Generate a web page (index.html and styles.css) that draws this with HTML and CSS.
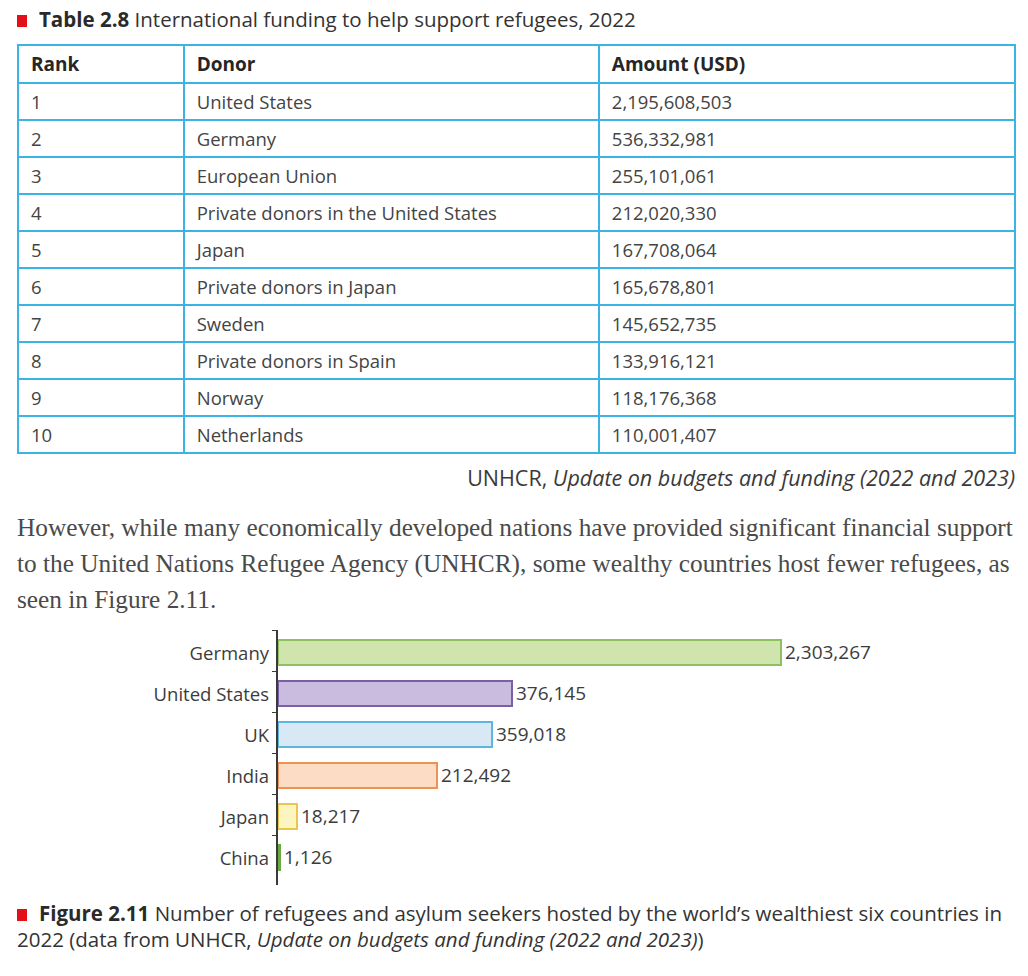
FILE: index.html
```html
<!DOCTYPE html>
<html lang="en">
<head>
  <meta charset="UTF-8">
  <title>Table 2.8 and Figure 2.11</title>
  <link rel="stylesheet" href="styles.css">
</head>
<body>
  <div class="page">
    <div class="caption table-caption">
      <span class="marker"></span><b>Table 2.8</b> International funding to help support refugees, 2022
    </div>

    <table class="donors">
      <colgroup>
        <col class="col-rank">
        <col class="col-donor">
        <col class="col-amount">
      </colgroup>
      <thead>
        <tr><th>Rank</th><th>Donor</th><th>Amount (USD)</th></tr>
      </thead>
      <tbody>
        <tr><td>1</td><td>United States</td><td>2,195,608,503</td></tr>
        <tr><td>2</td><td>Germany</td><td>536,332,981</td></tr>
        <tr><td>3</td><td>European Union</td><td>255,101,061</td></tr>
        <tr><td>4</td><td>Private donors in the United States</td><td>212,020,330</td></tr>
        <tr><td>5</td><td>Japan</td><td>167,708,064</td></tr>
        <tr><td>6</td><td>Private donors in Japan</td><td>165,678,801</td></tr>
        <tr><td>7</td><td>Sweden</td><td>145,652,735</td></tr>
        <tr><td>8</td><td>Private donors in Spain</td><td>133,916,121</td></tr>
        <tr><td>9</td><td>Norway</td><td>118,176,368</td></tr>
        <tr><td>10</td><td>Netherlands</td><td>110,001,407</td></tr>
      </tbody>
    </table>

    <div class="source">UNHCR, <i>Update on budgets and funding (2022 and 2023)</i></div>

    <p class="body-text">However, while many economically developed nations have provided significant financial support to the United Nations Refugee Agency (UNHCR), some wealthy countries host fewer refugees, as seen in Figure 2.11.</p>

    <div class="chart">
      <div class="chart-row">
        <div class="label">Germany</div>
        <div class="bar-cell"><div class="bar green" style="width: 505px"></div><span class="value">2,303,267</span></div>
      </div>
      <div class="chart-row">
        <div class="label">United States</div>
        <div class="bar-cell"><div class="bar purple" style="width: 236px"></div><span class="value">376,145</span></div>
      </div>
      <div class="chart-row">
        <div class="label">UK</div>
        <div class="bar-cell"><div class="bar blue" style="width: 216px"></div><span class="value">359,018</span></div>
      </div>
      <div class="chart-row">
        <div class="label">India</div>
        <div class="bar-cell"><div class="bar orange" style="width: 161px"></div><span class="value">212,492</span></div>
      </div>
      <div class="chart-row">
        <div class="label">Japan</div>
        <div class="bar-cell"><div class="bar yellow" style="width: 21px"></div><span class="value">18,217</span></div>
      </div>
      <div class="chart-row">
        <div class="label">China</div>
        <div class="bar-cell"><div class="bar dark-green" style="width: 4px"></div><span class="value">1,126</span></div>
      </div>
    </div>

    <div class="caption figure-caption">
      <span class="marker"></span><b>Figure 2.11</b> Number of refugees and asylum seekers hosted by the world’s wealthiest six countries in 2022 (data from UNHCR, <i>Update on budgets and funding (2022 and 2023)</i>)
    </div>
  </div>
</body>
</html>
```

FILE: styles.css
```css
* {
  margin: 0;
  padding: 0;
  box-sizing: border-box;
}

body {
  background: #ffffff;
  font-family: "Open Sans", "Noto Sans", sans-serif;
  color: #3c3c3c;
}

.page {
  padding: 6px 10px 0 17px;
}

/* captions with red marker */
.caption {
  font-size: 20.5px;
  line-height: 26px;
  color: #333333;
}

.caption b {
  color: #2a2a2a;
  font-weight: 700;
}

.marker {
  display: inline-block;
  width: 10px;
  height: 12px;
  margin-right: 12px;
  background: #e3101a;
}

/* table */
.donors {
  width: 999px;
  margin-top: 12px;
  border-collapse: collapse;
  font-size: 18.5px;
  border: 2px solid #3ab4e4;
}

.col-rank { width: 166px; }
.col-donor { width: 416px; }
.col-amount { width: 417px; }

.donors th,
.donors td {
  height: 37px;
  padding: 0 12px;
  text-align: left;
  border: 2px solid #3ab4e4;
  vertical-align: middle;
}

.donors th {
  font-weight: 700;
  font-size: 19px;
  color: #262626;
  height: 38px;
}

.donors td {
  font-weight: 400;
  color: #444444;
}

.source {
  margin-top: 11px;
  padding-right: 3px;
  text-align: right;
  font-size: 21.5px;
  line-height: 26px;
  color: #3a3a3a;
}

/* paragraph */
.body-text {
  margin-top: 18px;
  width: 1001px;
  font-family: "Liberation Serif", serif;
  font-size: 25.3px;
  line-height: 36px;
  color: #4a4a4a;
}

/* chart */
.chart {
  margin-top: 17px;
  padding: 4px 0 8px;
  display: flex;
  flex-direction: column;
  gap: 13px;
}

.chart-row {
  display: flex;
  align-items: center;
  height: 28px;
}

.label {
  width: 260px;
  padding-right: 8px;
  text-align: right;
  font-size: 18.5px;
  color: #3c3c3c;
}

.bar-cell {
  position: relative;
  display: flex;
  align-items: center;
  height: 28px;
  gap: 3px;
}

/* axis spans the gaps between rows */
.bar-cell::before {
  content: "";
  position: absolute;
  left: -1px;
  top: -8px;
  bottom: -7px;
  width: 2px;
  background: #3a3a3a;
}

.bar-cell::after {
  content: "";
  position: absolute;
  left: -5px;
  top: -8px;
  width: 5px;
  height: 1px;
  background: #3a3a3a;
}

.chart-row:last-child .bar-cell::before {
  bottom: -14px;
}

.bar {
  height: 27px;
  border: 2px solid;
}

.green { background: #cfe5ad; border-color: #8fc05e; }
.purple { background: #c9bcdf; border-color: #7a5ea6; }
.blue { background: #d8e8f5; border-color: #5db6de; }
.orange { background: #fcdcc5; border-color: #ee9254; }
.yellow { background: #fdf5bf; border-color: #eec54c; }
.dark-green { background: #8cc163; border-color: #6aa843; }

.value {
  font-size: 19px;
  color: #3c3c3c;
}

.figure-caption {
  margin-top: 21px;
}
```
